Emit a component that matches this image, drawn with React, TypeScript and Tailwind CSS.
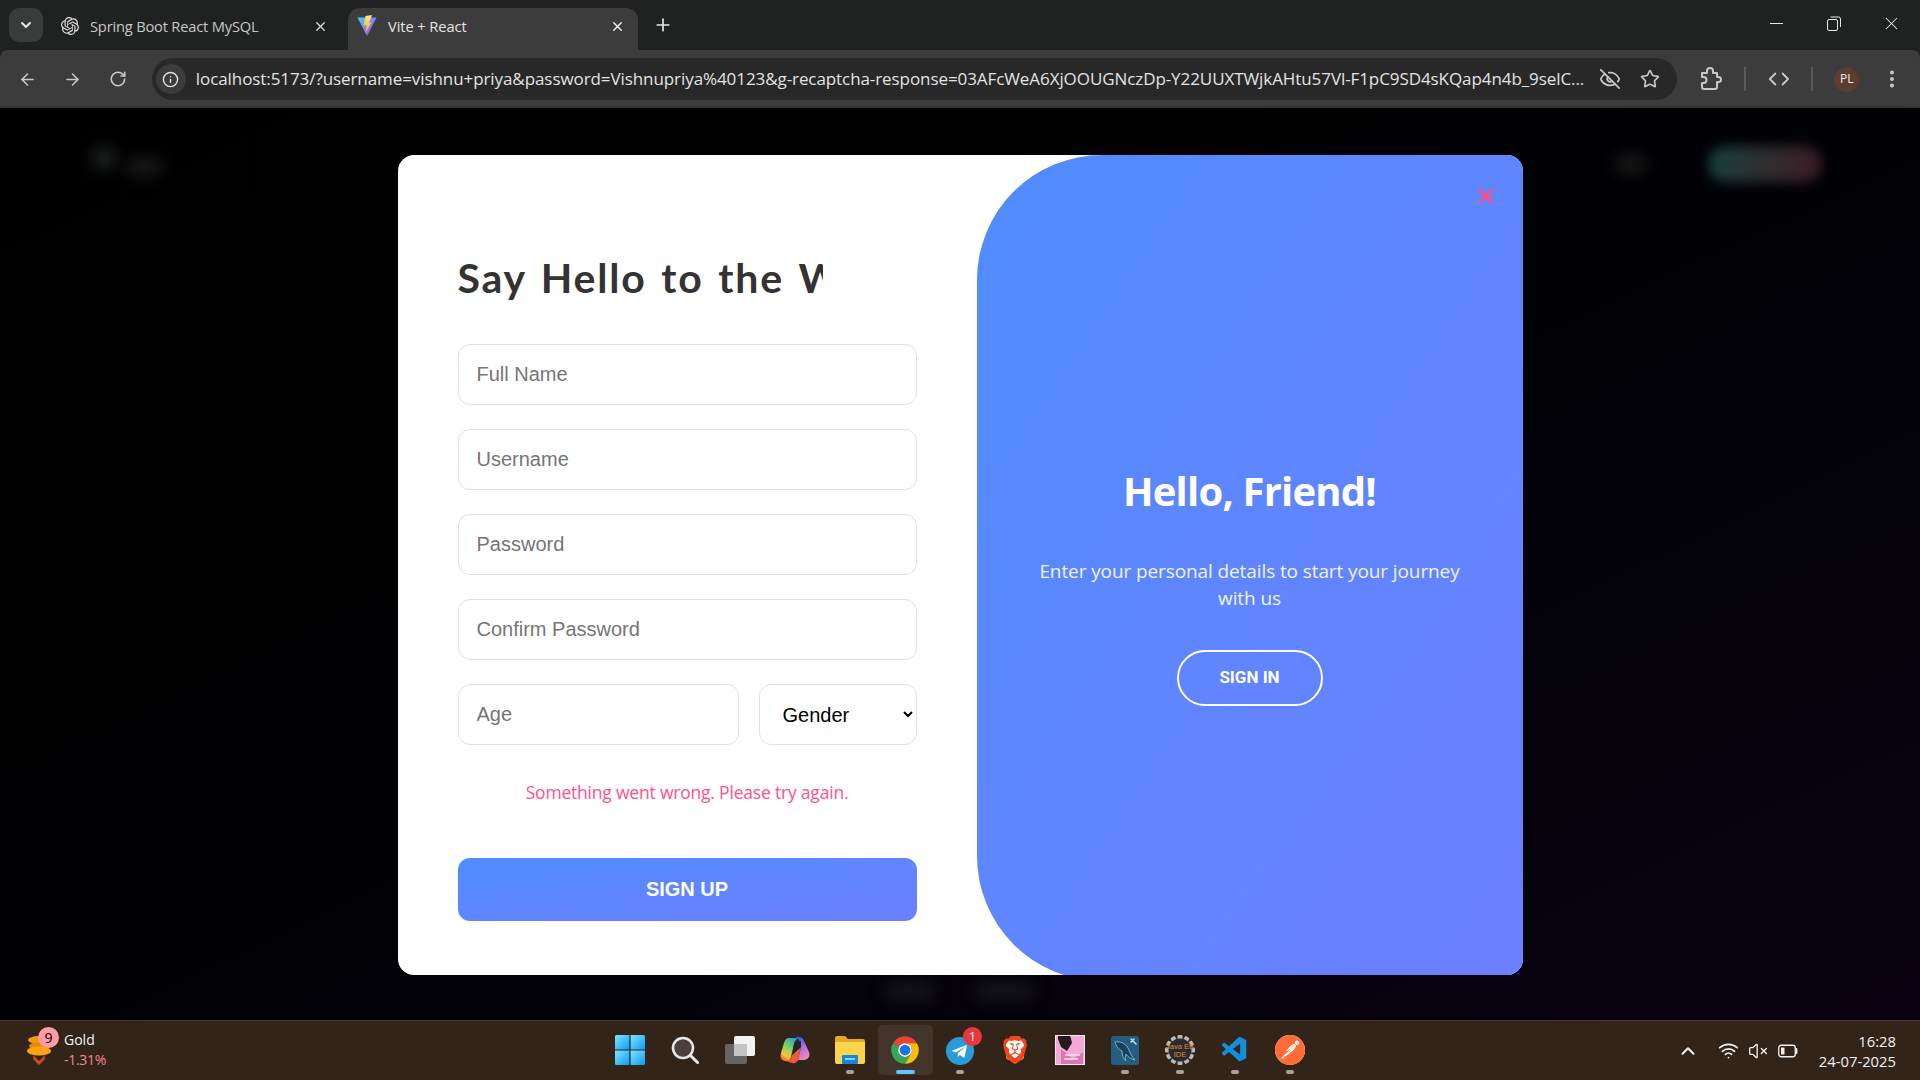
import React from 'react';
import {
  ArrowLeft,
  ArrowRight,
  ChevronDown,
  ChevronUp,
  Code,
  EllipsisVertical,
  EyeOff,
  Info,
  Plus,
  RotateCw,
  Star,
  VolumeX,
  Wifi,
  X,
} from 'lucide-react';
import { SiOpenai, SiBrave, SiPostman } from 'react-icons/si';
import { FaTelegramPlane } from 'react-icons/fa';
import { VscVscode } from 'react-icons/vsc';

const URL_TEXT =
  'localhost:5173/?username=vishnu+priya&password=Vishnupriya%40123&g-recaptcha-response=03AFcWeA6XjOOUGNczDp-Y22UUXTWjkAHtu57Vl-F1pC9SD4sKQap4n4b_9selC...';

const ViteIcon = () => (
  <svg width="20" height="22" viewBox="0 0 20 22">
    <defs>
      <linearGradient id="viteBody" x1="0" y1="0" x2="1" y2="1">
        <stop offset="0" stopColor="#41d1ff" />
        <stop offset="1" stopColor="#bd34fe" />
      </linearGradient>
      <linearGradient id="viteBolt" x1="0" y1="0" x2="0" y2="1">
        <stop offset="0" stopColor="#ffea83" />
        <stop offset="1" stopColor="#ffa800" />
      </linearGradient>
    </defs>
    <path d="M0.5 2.5 L19.5 2.5 L10 21 Z" fill="url(#viteBody)" />
    <path d="M8.5 1 L15 0 L12 8 L14.5 7.5 L8.5 18 L9.5 10 L6.5 10.5 Z" fill="url(#viteBolt)" />
  </svg>
);

const RestoreIcon = () => (
  <svg width="14" height="15" viewBox="0 0 14 15" fill="none" stroke="#e8e8e8" strokeWidth="1">
    <rect x="0.5" y="3.5" width="10" height="11" rx="1.5" />
    <path d="M3.5 1 H11.5 A2 2 0 0 1 13.5 3 V11" />
  </svg>
);

const ExtensionIcon = () => (
  <svg width="22" height="24" viewBox="0 0 22 24" fill="none" stroke="#c8c8c8" strokeWidth="2" strokeLinejoin="round">
    <path d="M2 6 H7 V4 A3 3 0 0 1 13 4 V6 H17 V10 H18.5 A2.5 2.5 0 0 1 18.5 15 H17 V20 A2 2 0 0 1 15 22 H4 A2 2 0 0 1 2 20 V16 H3.5 A3 3 0 0 0 3.5 10 H2 Z" />
  </svg>
);

const WindowsIcon = () => (
  <svg width="30" height="30" viewBox="0 0 30 30">
    <defs>
      <linearGradient id="winTile" x1="0" y1="0" x2="1" y2="1">
        <stop offset="0" stopColor="#7fe4ff" />
        <stop offset="1" stopColor="#0d9bf5" />
      </linearGradient>
    </defs>
    <path d="M0 1.5 A1.5 1.5 0 0 1 1.5 0 H14.4 V14.4 H0 Z" fill="url(#winTile)" />
    <path d="M15.6 0 H28.5 A1.5 1.5 0 0 1 30 1.5 V14.4 H15.6 Z" fill="url(#winTile)" />
    <path d="M0 15.6 H14.4 V30 H1.5 A1.5 1.5 0 0 1 0 28.5 Z" fill="url(#winTile)" />
    <path d="M15.6 15.6 H30 V28.5 A1.5 1.5 0 0 1 28.5 30 H15.6 Z" fill="url(#winTile)" />
  </svg>
);

const SearchIcon = () => (
  <svg width="28" height="28" viewBox="0 0 28 28" fill="none">
    <circle cx="12" cy="12" r="10" fill="#4b3f39" stroke="#e6e6e6" strokeWidth="2.6" />
    <path d="M19.5 19.5 L26.5 26.5" stroke="#e6e6e6" strokeWidth="3" strokeLinecap="round" />
  </svg>
);

const TaskViewIcon = () => (
  <svg width="30" height="28" viewBox="0 0 30 28">
    <rect x="9" y="0" width="21" height="20" rx="2" fill="#f2f2f2" />
    <rect x="0" y="8" width="22" height="20" rx="2" fill="#6d6d6d" fillOpacity="0.9" />
    <rect x="9" y="8" width="13" height="12" fill="#c4c4c4" />
  </svg>
);

const CopilotIcon = () => (
  <svg width="30" height="30" viewBox="0 0 30 30">
    <defs>
      <linearGradient id="copA" x1="0.8" y1="0" x2="0.2" y2="1">
        <stop offset="0" stopColor="#1f9be8" />
        <stop offset="0.45" stopColor="#7fd35a" />
        <stop offset="0.8" stopColor="#f7c531" />
        <stop offset="1" stopColor="#ef5a2b" />
      </linearGradient>
      <linearGradient id="copB" x1="0.3" y1="0" x2="0.8" y2="1">
        <stop offset="0" stopColor="#2a62dd" />
        <stop offset="0.45" stopColor="#b56cea" />
        <stop offset="1" stopColor="#f78fb0" />
      </linearGradient>
    </defs>
    <path d="M9 3 H19 Q15 4 14 9 L11 22 Q10 27 5 26 Q-1 25 1 18 L4 8 Q5.5 3 9 3 Z" fill="url(#copA)" />
    <path d="M16 2 Q22 1 24 6 L29 17 Q31 24 24 25 L18 25 L21 12 Q22 7 16 2 Z" fill="url(#copB)" />
    <path d="M12 20 L21 12 L18 25 Q16 29 12 28 Q8 27 7 26 Q11 25 12 20 Z" fill="#ee5a35" />
    <path d="M14 9 L21 6 L21 12 L12 20 Z" fill="#20242c" />
  </svg>
);

const FolderIcon = () => (
  <svg width="30" height="28" viewBox="0 0 30 28">
    <path d="M0 2 A2 2 0 0 1 2 0 H10 L13 3 H28 A2 2 0 0 1 30 5 V8 H0 Z" fill="#e5a823" />
    <path d="M0 6 H30 V26 A2 2 0 0 1 28 28 H2 A2 2 0 0 1 0 26 Z" fill="#fcd34f" />
    <rect x="7" y="19" width="16" height="9" rx="1" fill="#1687d9" />
    <rect x="10" y="22" width="10" height="2" fill="#8fd2f7" />
  </svg>
);

const ChromeIcon = () => (
  <svg width="30" height="30" viewBox="0 0 24 24">
    <path d="M2.47 6.5 A11 11 0 0 1 21.53 6.5 H12 A5.5 5.5 0 0 0 7.24 9.25 Z" fill="#ea4335" />
    <path d="M21.53 6.5 A11 11 0 0 1 12 23 L16.76 14.75 A5.5 5.5 0 0 0 12 6.5 Z" fill="#fbbc04" />
    <path d="M12 23 A11 11 0 0 1 2.47 6.5 L7.24 9.25 A5.5 5.5 0 0 0 16.76 14.75 Z" fill="#34a853" />
    <circle cx="12" cy="12" r="5.5" fill="#fff" />
    <circle cx="12" cy="12" r="4.3" fill="#1a73e8" />
  </svg>
);

const TelegramIcon = () => (
  <div className="relative mt-[2px] flex h-[28px] w-[28px] items-center justify-center rounded-full bg-[#2a9bd8]">
    <FaTelegramPlane className="mr-[2px] h-[17px] w-[17px] text-white" />
    <span className="absolute -right-[8px] -top-[10px] flex h-[19px] w-[19px] items-center justify-center rounded-full bg-[#e8383d] font-['Open_Sans',sans-serif] text-[12px] text-white">
      1
    </span>
  </div>
);

const BraveIcon = () => (
  <div className="relative flex h-[32px] w-[28px] items-center justify-center">
    <div className="absolute inset-x-[5px] inset-y-[6px] rounded-sm bg-white" />
    <SiBrave className="relative h-[32px] w-[28px] text-[#f1471d]" />
  </div>
);

const ThumbIcon = () => (
  <svg width="30" height="30" viewBox="0 0 30 30">
    <rect width="30" height="30" fill="#f2a9d8" />
    <path d="M3 0 H15 L17 8 L12 16 L6 12 L3 4 Z" fill="#241a1f" />
    <path d="M6 14 L18 24 L28 17 L28 30 H6 Z" fill="#d977b4" />
    <path d="M10 20 H25 M9 24 H23" stroke="#f9dff0" strokeWidth="1.5" />
    <rect x="0.5" y="0.5" width="29" height="29" fill="none" stroke="#f7e6f2" />
  </svg>
);

const MysqlIcon = () => (
  <svg width="28" height="29" viewBox="0 0 28 29" fill="none">
    <rect width="28" height="29" rx="3" fill="#235d80" />
    <path
      d="M4 6 C9 5 14 7 17 12 C19 16 20 20 24 24 C20 23 17 21 15 18 C14 21 14 23 15 25 C12 23 11 19 11 15 C8 14 5 10 4 6 Z"
      fill="#16405b"
      stroke="#8fb7cd"
      strokeWidth="0.9"
    />
    <path d="M20 3 L25 8 M23 3 L20 6" stroke="#c9dbe6" strokeWidth="1.6" strokeLinecap="round" />
  </svg>
);

const JavaIdeIcon = () => (
  <svg width="30" height="30" viewBox="0 0 30 30">
    <g fill="#b9b9b9">
      {[0, 30, 60, 90, 120, 150].map((deg) => (
        <rect key={deg} x="12.5" y="0" width="5" height="30" rx="1" transform={`rotate(${deg} 15 15)`} />
      ))}
    </g>
    <circle cx="15" cy="15" r="11.5" fill="#2a2a33" />
    <text x="15" y="13.5" textAnchor="middle" fontSize="7.5" fontFamily="Liberation Sans, sans-serif" fill="#e98a1e">
      Java EE
    </text>
    <text x="15" y="21.5" textAnchor="middle" fontSize="7.5" fontFamily="Liberation Sans, sans-serif" fill="#e98a1e">
      IDE
    </text>
  </svg>
);

const PostmanIcon = () => (
  <div className="relative flex h-[30px] w-[30px] items-center justify-center rounded-full bg-white">
    <SiPostman className="h-[30px] w-[30px] text-[#ff6c37]" />
  </div>
);

const GoldIcon = () => (
  <svg width="26" height="30" viewBox="0 0 26 30">
    <ellipse cx="13" cy="5" rx="11" ry="4" fill="#f59a0c" />
    <ellipse cx="14" cy="11" rx="11" ry="4" fill="#e98708" />
    <ellipse cx="13" cy="16" rx="12" ry="4.5" fill="#f8a512" />
    <path d="M8 22 L13 27 L18 22 L18 24 L13 29 L8 24 Z" fill="#d5481c" stroke="#d5481c" strokeWidth="1.5" />
  </svg>
);

const BatteryIcon = () => (
  <svg width="20" height="14" viewBox="0 0 20 14" fill="none">
    <rect x="0.75" y="1.25" width="16.5" height="11.5" rx="2.5" stroke="#f2f2f2" strokeWidth="1.3" />
    <rect x="3" y="3.5" width="3.5" height="7" rx="0.5" fill="#f2f2f2" />
    <path d="M18.5 5 V9" stroke="#f2f2f2" strokeWidth="1.8" strokeLinecap="round" />
  </svg>
);

const taskbarApps = [
  { key: 'start', icon: <WindowsIcon /> },
  { key: 'search', icon: <SearchIcon /> },
  { key: 'taskview', icon: <TaskViewIcon /> },
  { key: 'copilot', icon: <CopilotIcon /> },
  { key: 'files', icon: <FolderIcon />, running: true },
  { key: 'chrome', icon: <ChromeIcon />, active: true },
  { key: 'telegram', icon: <TelegramIcon />, running: true },
  { key: 'brave', icon: <BraveIcon /> },
  { key: 'thumb', icon: <ThumbIcon /> },
  { key: 'mysql', icon: <MysqlIcon />, running: true },
  { key: 'java', icon: <JavaIdeIcon />, running: true },
  { key: 'vscode', icon: <VscVscode className="h-[30px] w-[30px] text-[#0f8fdc]" />, running: true },
  { key: 'postman', icon: <PostmanIcon />, running: true },
];

const inputClass =
  "h-[61px] w-full rounded-[12px] border border-[#e0e0e0] bg-white px-[18px] font-['Liberation_Sans',sans-serif] text-[20px] text-black outline-none placeholder:text-[#757575]";

const TabStrip = () => (
  <div className="flex h-[50px] shrink-0 items-end bg-[#202221] pl-[9px] font-['Open_Sans',sans-serif]">
    <div className="mb-[8px] flex h-[34px] w-[34px] items-center justify-center rounded-[10px] bg-[#3a3b3b]">
      <ChevronDown className="h-[16px] w-[16px] text-[#e8e8e8]" strokeWidth={3} />
    </div>
    <div className="flex h-[42px] w-[305px] items-center pb-[6px] pl-[18px] pr-[17px]">
      <SiOpenai className="h-[18px] w-[18px] text-[#e0e0e0]" />
      <span className="ml-[11px] flex-1 text-[14.7px] tracking-[-0.2px] text-[#c7c7c7]">Spring Boot React MySQL</span>
      <X className="mr-[3px] h-[15px] w-[15px] text-[#d8d8d8]" strokeWidth={2.2} />
    </div>
    <div className="flex h-[42px] w-[290px] items-center rounded-t-[12px] bg-[#3c3c3c] pb-[6px] pl-[9px] pr-[13px]">
      <ViteIcon />
      <span className="ml-[11px] flex-1 text-[14.7px] tracking-[-0.1px] text-[#e4e4e4]">Vite + React</span>
      <X className="h-[15px] w-[15px] text-[#e8e8e8]" strokeWidth={2.4} />
    </div>
    <div className="mb-[7px] ml-[15px] flex h-[36px] flex-1 items-center">
      <Plus className="h-[20px] w-[20px] text-[#e8e8e8]" strokeWidth={2} />
      <div className="ml-auto flex items-center pb-[4px]">
        <div className="h-[1px] w-[13px] bg-[#e8e8e8]" />
        <div className="ml-[44px]">
          <RestoreIcon />
        </div>
        <X className="ml-[40px] mr-[18px] h-[21px] w-[21px] text-[#e8e8e8]" strokeWidth={1.2} />
      </div>
    </div>
  </div>
);

const Toolbar = () => (
  <div className="flex h-[58px] shrink-0 items-center rounded-t-[8px] border-b-[2px] border-[#333333] bg-[#3c3c3c] pl-[18px] pr-[17px] pt-[2px] text-[#c8c8c8]">
    <ArrowLeft className="h-[19px] w-[19px]" strokeWidth={2} />
    <ArrowRight className="ml-[26px] h-[19px] w-[19px]" strokeWidth={2} />
    <RotateCw className="ml-[27px] h-[18px] w-[18px]" strokeWidth={2.2} />
    <div className="ml-[25px] flex h-[42px] w-[1531px] items-center rounded-full bg-[#282828] pl-[4px] pr-[15px]">
      <div className="flex h-[30px] w-[30px] items-center justify-center rounded-full bg-[#3c3c3c]">
        <Info className="h-[17px] w-[17px] text-[#e0e0e0]" strokeWidth={2} />
      </div>
      <span className="ml-[10px] w-[1392px] overflow-hidden whitespace-nowrap font-['Open_Sans',sans-serif] text-[17px] tracking-[-0.08px] text-[#e3e3e3]">
        {URL_TEXT}
      </span>
      <EyeOff className="ml-[11px] h-[22px] w-[22px]" strokeWidth={1.9} />
      <Star className="ml-[19px] h-[20px] w-[20px]" strokeWidth={2} />
    </div>
    <div className="ml-[23px]">
      <ExtensionIcon />
    </div>
    <div className="ml-[22px] h-[24px] w-[2px] bg-[#5a5a5a]" />
    <Code className="ml-[22px] h-[22px] w-[22px]" strokeWidth={2} />
    <div className="ml-[21px] h-[24px] w-[2px] bg-[#5a5a5a]" />
    <div className="ml-[21px] flex h-[25px] w-[25px] items-center justify-center rounded-full bg-[#5d3c32] font-['Open_Sans',sans-serif] text-[12px] text-[#f0f0f0]">
      PL
    </div>
    <EllipsisVertical className="ml-[22px] h-[22px] w-[22px]" strokeWidth={2.4} />
  </div>
);

const SignUpForm = () => (
  <div className="flex w-[579px] shrink-0 flex-col px-[60px] pt-[93px]">
    <h1 className="h-[60px] w-[365px] overflow-hidden whitespace-nowrap font-['Lato',sans-serif] text-[41px] font-bold leading-[60px] tracking-[1.8px] text-[#333333] [word-spacing:3px]">
      Say Hello to the W
    </h1>
    <div className="mt-[36px] flex flex-col gap-[24px]">
      <input className={inputClass} placeholder="Full Name" />
      <input className={inputClass} placeholder="Username" />
      <input className={inputClass} placeholder="Password" />
      <input className={inputClass} placeholder="Confirm Password" />
      <div className="flex gap-[20px]">
        <input className={`${inputClass} flex-1`} placeholder="Age" />
        <select className="h-[61px] w-[158px] shrink-0 rounded-[12px] border border-[#e0e0e0] bg-white pl-[19px] font-['Liberation_Sans',sans-serif] text-[20px] text-black outline-none">
          <option>Gender</option>
        </select>
      </div>
    </div>
    <p className="mt-[34px] text-center font-['Open_Sans',sans-serif] text-[17.5px] leading-[27px] tracking-[-0.2px] text-[#ff5288]">
      Something went wrong. Please try again.
    </p>
    <button className="mt-[52px] h-[63px] w-full rounded-[12px] bg-linear-to-br from-[#4f8cff] to-[#6c7fff] pb-[2px] font-['Liberation_Sans',sans-serif] text-[20px] font-bold text-white">
      SIGN UP
    </button>
  </div>
);

const SignInPanel = () => (
  <div className="relative flex h-[826px] flex-1 flex-col items-center rounded-l-[125px] bg-linear-to-br from-[#4f8cff] to-[#6c7fff] pt-[309px] text-white">
    <X className="absolute right-[26px] top-[30px] h-[22px] w-[22px] text-[#ff4d85]" strokeWidth={3.4} />
    <h2 className="font-['Open_Sans',sans-serif] text-[40px] font-bold leading-[54px] tracking-[-0.8px]">Hello, Friend!</h2>
    <p className="mt-[39px] w-[440px] pt-[1px] text-center font-['Open_Sans',sans-serif] text-[19px] leading-[27px] tracking-[-0.1px] text-white/90">
      Enter your personal details to start your journey with us
    </p>
    <button className="mt-[38px] h-[56px] w-[146px] rounded-full border-2 border-white font-['Roboto',sans-serif] text-[17px] font-bold">
      SIGN IN
    </button>
  </div>
);

const Taskbar = () => (
  <div className="grid h-[60px] shrink-0 grid-cols-[1fr_auto_1fr] border-t border-[#4a3b30] bg-[#33241a] font-['Open_Sans',sans-serif] text-[#f2f2f2]">
    <div className="flex items-center pb-[1px] pl-[26px]">
      <div className="relative">
        <GoldIcon />
        <span className="absolute -right-[7px] -top-[8px] flex h-[21px] w-[21px] items-center justify-center rounded-full bg-[#ff9aa6] text-[14px] text-black">
          9
        </span>
      </div>
      <div className="ml-[12px] flex flex-col text-[14px] leading-[20px]">
        <span>Gold</span>
        <span className="tracking-[-0.3px] text-[#f2868f]">-1.31%</span>
      </div>
    </div>
    <div className="flex items-center pb-[1px]">
      {taskbarApps.map(({ key, icon, running, active }) => (
        <div
          key={key}
          className={`relative flex h-[50px] w-[55px] items-center justify-center rounded-[5px] ${active ? 'bg-[#43342c]' : ''}`}
        >
          {icon}
          {running && <span className="absolute bottom-[1px] left-[23px] h-[4px] w-[8px] rounded-full bg-[#a8a29e]" />}
          {active && <span className="absolute bottom-[1px] left-[18px] h-[4px] w-[19px] rounded-full bg-[#5cc8ff]" />}
        </div>
      ))}
    </div>
    <div className="flex items-center justify-end pr-[24px]">
      <ChevronUp className="h-[22px] w-[22px]" strokeWidth={2.2} />
      <Wifi className="ml-[19px] h-[21px] w-[21px]" strokeWidth={2} />
      <VolumeX className="ml-[9px] h-[20px] w-[20px]" strokeWidth={1.6} />
      <div className="ml-[10px]">
        <BatteryIcon />
      </div>
      <div className="ml-[21px] flex flex-col items-end text-[14.8px] leading-[20px]">
        <span>16:28</span>
        <span>24-07-2025</span>
      </div>
    </div>
  </div>
);

export default function App() {
  return (
    <div className="flex h-screen w-full flex-col overflow-hidden bg-[#202221]">
      <TabStrip />
      <Toolbar />
      <main className="relative flex flex-1 items-center justify-center overflow-hidden bg-linear-to-br from-black via-[#020206] to-[#0a0212] pt-[2px]">
        {/* blurred page behind the dialog */}
        <span className="absolute left-[92px] top-[38px] h-[24px] w-[24px] rounded-full bg-[#2a3330] opacity-70 blur-[8px]" />
        <span className="absolute left-[125px] top-[50px] h-[18px] w-[38px] rounded-full bg-[#252625] opacity-70 blur-[8px]" />
        <span className="absolute left-[1615px] top-[48px] h-[16px] w-[32px] rounded-full bg-[#1b1b1b] blur-[8px]" />
        <span className="absolute left-[1708px] top-[38px] h-[36px] w-[114px] rounded-full bg-linear-to-r from-[#0f3f3b] to-[#3a1a24] blur-[6px]" />
        <span className="absolute bottom-[22px] left-[885px] h-[14px] w-[50px] rounded-full bg-[#1a1a1a] blur-[8px]" />
        <span className="absolute bottom-[22px] left-[975px] h-[14px] w-[60px] rounded-full bg-[#1a1a1a] blur-[8px]" />
        <div className="relative flex h-[820px] w-[1125px] items-start overflow-hidden rounded-[16px] bg-white">
          <SignUpForm />
          <SignInPanel />
        </div>
      </main>
      <Taskbar />
    </div>
  );
}
